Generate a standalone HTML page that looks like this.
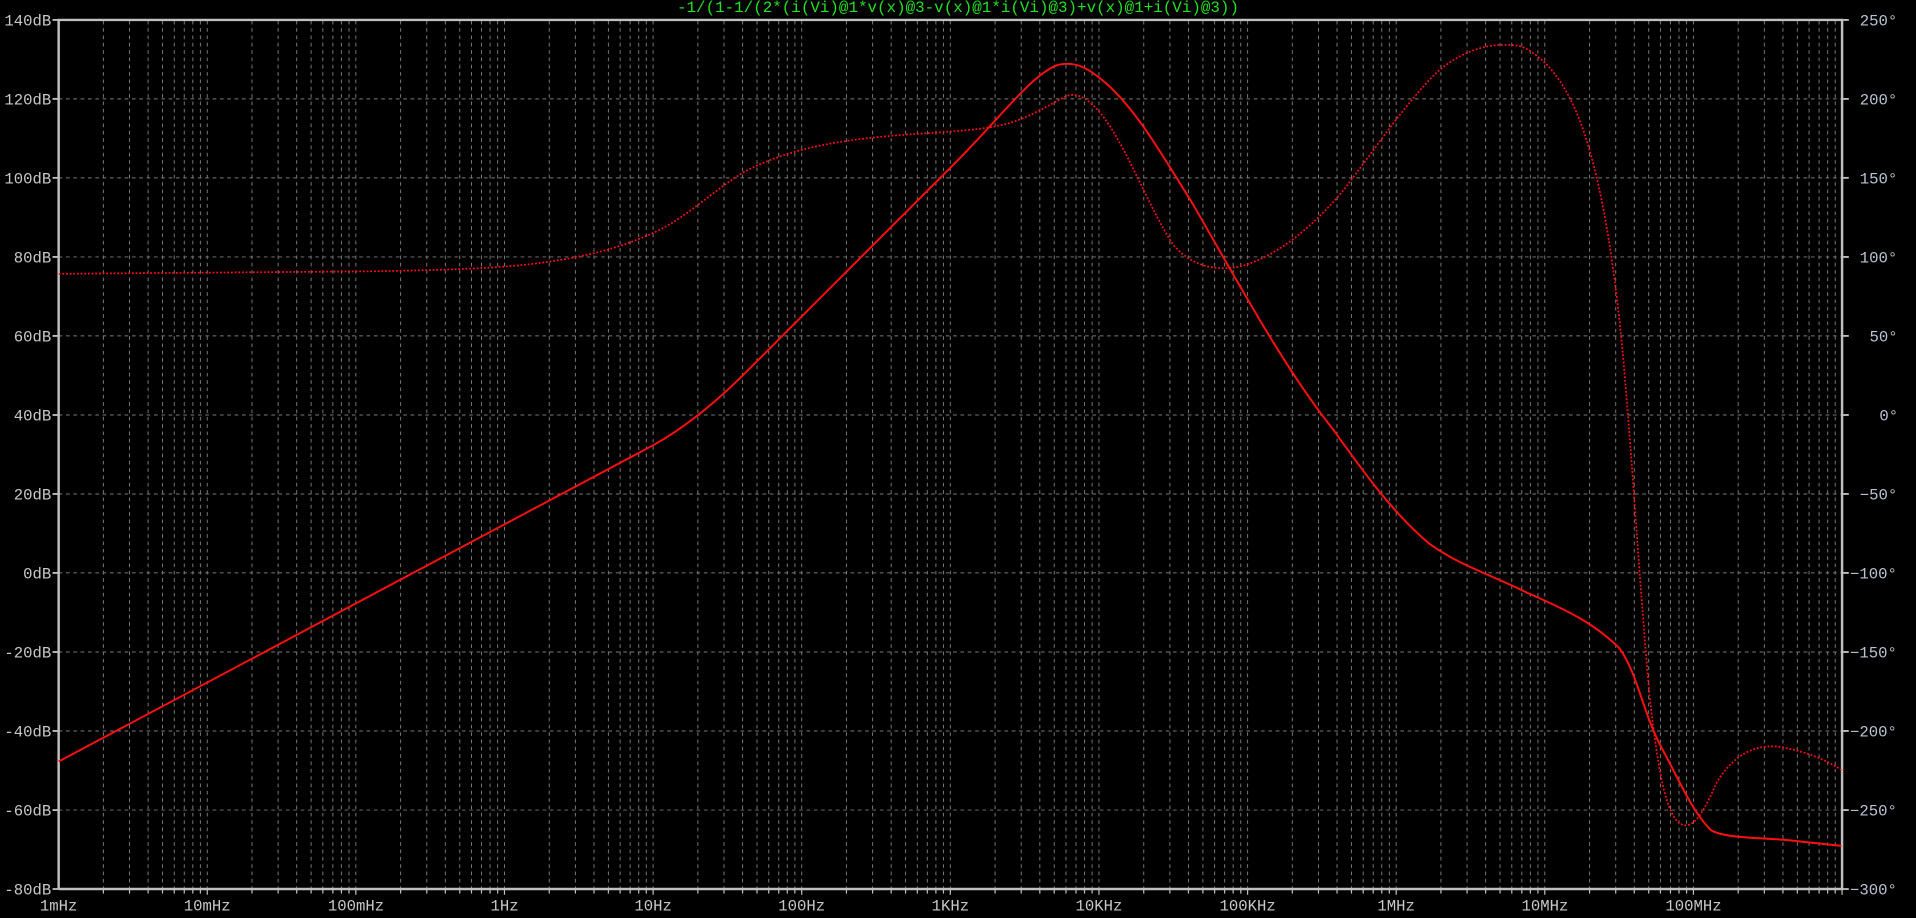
<!DOCTYPE html>
<html><head><meta charset="utf-8"><style>
html,body{margin:0;padding:0;background:#000;overflow:hidden}
svg{display:block}
text{font-family:"Liberation Mono","DejaVu Sans Mono",monospace;font-size:12.8px;fill:#c8c8c8}
</style></head><body>
<svg width="1916" height="918" viewBox="0 0 1568 751" preserveAspectRatio="none" xmlns="http://www.w3.org/2000/svg">
<defs>
<g id="dec" stroke="#7a7a7a" stroke-width="0.8" stroke-dasharray="3,3">
<line x1="36.6" y1="17" x2="36.6" y2="727"/>
<line x1="58.0" y1="17" x2="58.0" y2="727"/>
<line x1="73.2" y1="17" x2="73.2" y2="727"/>
<line x1="85.0" y1="17" x2="85.0" y2="727"/>
<line x1="94.6" y1="17" x2="94.6" y2="727"/>
<line x1="102.8" y1="17" x2="102.8" y2="727"/>
<line x1="109.8" y1="17" x2="109.8" y2="727"/>
<line x1="116.0" y1="17" x2="116.0" y2="727"/>
<line x1="121.6" y1="17" x2="121.6" y2="727"/>
</g>
<g id="tk" stroke="#c0c0c0" stroke-width="1">
<line x1="36.6" y1="727" x2="36.6" y2="731"/>
<line x1="58.0" y1="727" x2="58.0" y2="731"/>
<line x1="73.2" y1="727" x2="73.2" y2="731"/>
<line x1="85.0" y1="727" x2="85.0" y2="731"/>
<line x1="94.6" y1="727" x2="94.6" y2="731"/>
<line x1="102.8" y1="727" x2="102.8" y2="731"/>
<line x1="109.8" y1="727" x2="109.8" y2="731"/>
<line x1="116.0" y1="727" x2="116.0" y2="731"/>
<line x1="121.6" y1="727" x2="121.6" y2="732"/>
</g>
</defs>
<rect x="0" y="0" width="1568" height="751" fill="#000"/>
<use href="#dec" x="48"/><use href="#dec" x="169.6"/><use href="#dec" x="291.25"/><use href="#dec" x="412.9"/><use href="#dec" x="534.5"/><use href="#dec" x="656.1"/><use href="#dec" x="777.75"/><use href="#dec" x="899.4"/><use href="#dec" x="1021"/><use href="#dec" x="1142.6"/><use href="#dec" x="1264.25"/><use href="#dec" x="1385.9"/>
<use href="#tk" x="48"/><use href="#tk" x="169.6"/><use href="#tk" x="291.25"/><use href="#tk" x="412.9"/><use href="#tk" x="534.5"/><use href="#tk" x="656.1"/><use href="#tk" x="777.75"/><use href="#tk" x="899.4"/><use href="#tk" x="1021"/><use href="#tk" x="1142.6"/><use href="#tk" x="1264.25"/><use href="#tk" x="1385.9"/>
<g stroke="#7a7a7a" stroke-width="0.8" stroke-dasharray="3,3">
<line x1="48" y1="80.9" x2="1507" y2="80.9"/>
<line x1="48" y1="145.5" x2="1507" y2="145.5"/>
<line x1="48" y1="210.2" x2="1507" y2="210.2"/>
<line x1="48" y1="274.8" x2="1507" y2="274.8"/>
<line x1="48" y1="339.5" x2="1507" y2="339.5"/>
<line x1="48" y1="404.1" x2="1507" y2="404.1"/>
<line x1="48" y1="468.7" x2="1507" y2="468.7"/>
<line x1="48" y1="533.4" x2="1507" y2="533.4"/>
<line x1="48" y1="598.0" x2="1507" y2="598.0"/>
<line x1="48" y1="662.7" x2="1507" y2="662.7"/>
</g>
<g stroke="#c0c0c0" stroke-width="2" fill="none">
<polyline points="48,727.3 48,16.3 1507.5,16.3 1507.5,727.3 48,727.3"/>
</g>
<g stroke="#c0c0c0" stroke-width="1.5">
<line x1="43" y1="16.3" x2="48" y2="16.3"/><line x1="43" y1="80.9" x2="48" y2="80.9"/><line x1="43" y1="145.5" x2="48" y2="145.5"/><line x1="43" y1="210.2" x2="48" y2="210.2"/><line x1="43" y1="274.8" x2="48" y2="274.8"/><line x1="43" y1="339.5" x2="48" y2="339.5"/><line x1="43" y1="404.1" x2="48" y2="404.1"/><line x1="43" y1="468.7" x2="48" y2="468.7"/><line x1="43" y1="533.4" x2="48" y2="533.4"/><line x1="43" y1="598" x2="48" y2="598"/><line x1="43" y1="662.7" x2="48" y2="662.7"/><line x1="43" y1="727.3" x2="48" y2="727.3"/>
<line x1="1507" y1="16.3" x2="1513" y2="16.3"/><line x1="1507" y1="80.9" x2="1513" y2="80.9"/><line x1="1507" y1="145.5" x2="1513" y2="145.5"/><line x1="1507" y1="210.2" x2="1513" y2="210.2"/><line x1="1507" y1="274.8" x2="1513" y2="274.8"/><line x1="1507" y1="339.5" x2="1513" y2="339.5"/><line x1="1507" y1="404.1" x2="1513" y2="404.1"/><line x1="1507" y1="468.7" x2="1513" y2="468.7"/><line x1="1507" y1="533.4" x2="1513" y2="533.4"/><line x1="1507" y1="598" x2="1513" y2="598"/><line x1="1507" y1="662.7" x2="1513" y2="662.7"/><line x1="1507" y1="727.3" x2="1513" y2="727.3"/>
</g>
<g text-anchor="end">
<text x="42" y="21">140dB</text><text x="42" y="85.5">120dB</text><text x="42" y="150">100dB</text><text x="42" y="214.7">80dB</text><text x="42" y="279.3">60dB</text><text x="42" y="344">40dB</text><text x="42" y="408.6">20dB</text><text x="42" y="473.2">0dB</text><text x="42" y="537.9">-20dB</text><text x="42" y="602.5">-40dB</text><text x="42" y="667.2">-60dB</text><text x="42" y="731.8">-80dB</text>
</g>
<g>
<text x="1522" y="21" style="fill:#b8c4d4">250°</text><text x="1522" y="85.5" style="fill:#b8c4d4">200°</text><text x="1522" y="150" style="fill:#b8c4d4">150°</text><text x="1522" y="214.7" style="fill:#b8c4d4">100°</text><text x="1530" y="279.3" style="fill:#b8c4d4">50°</text><text x="1538" y="344" style="fill:#b8c4d4">0°</text><text x="1522" y="408.6" style="fill:#b8c4d4">−50°</text><text x="1514" y="473.2" style="fill:#b8c4d4">−100°</text><text x="1514" y="537.9" style="fill:#b8c4d4">−150°</text><text x="1514" y="602.5" style="fill:#b8c4d4">−200°</text><text x="1514" y="667.2" style="fill:#b8c4d4">−250°</text><text x="1514" y="731.8" style="fill:#b8c4d4">−300°</text>
</g>
<g text-anchor="middle">
<text x="48" y="745">1mHz</text><text x="169.6" y="745">10mHz</text><text x="291.3" y="745">100mHz</text><text x="412.9" y="745">1Hz</text><text x="534.5" y="745">10Hz</text><text x="656.1" y="745">100Hz</text><text x="777.8" y="745">1KHz</text><text x="899.4" y="745">10KHz</text><text x="1021" y="745">100KHz</text><text x="1142.6" y="745">1MHz</text><text x="1264.3" y="745">10MHz</text><text x="1385.9" y="745">100MHz</text>
</g>
<text x="784" y="10" text-anchor="middle" style="fill:#22e022;font-size:13px">-1/(1-1/(2*(i(Vi)@1*v(x)@3-v(x)@1*i(Vi)@3)+v(x)@1+i(Vi)@3))</text>
<g fill="none" stroke="#ff1010" stroke-width="1.6" stroke-linejoin="round">
<path d="M48,623 L535,364 C560,350 585,330 610,305 C660,255 720,195 780,135 C820,95 845,60 866,53 C880,50 890,55 905,68 C930,90 950,125 975,165 C1010,225 1050,300 1090,350 C1115,385 1140,420 1170,445 C1195,463 1220,470 1250,485 C1280,498 1305,510 1325,530 C1340,550 1345,585 1360,612 C1375,640 1385,664 1400,679 C1410,685 1430,685 1460,687 L1507,692"/>
</g>
<g fill="none" stroke="#ff1010" stroke-width="1.4" stroke-dasharray="1.5,1.5">
<path d="M48,224 L300,222 C360,221 410,220 450,214 C490,208 515,200 540,188 C565,175 585,155 610,140 C640,125 670,117 720,112 C760,108 800,108 825,101 C845,95 860,85 872,79 C880,75 890,80 900,92 C920,115 940,170 960,200 C975,218 995,222 1015,218 C1045,210 1075,185 1100,155 C1125,122 1150,85 1175,60 C1195,42 1220,33 1245,38 C1268,48 1287,75 1300,120 C1312,160 1322,220 1329,300 C1336,380 1342,480 1350,570 C1358,640 1365,672 1378,675 C1388,677 1396,660 1405,640 C1420,615 1440,607 1462,612 C1485,617 1500,625 1507,630"/>
</g>
</svg>
</body></html>
